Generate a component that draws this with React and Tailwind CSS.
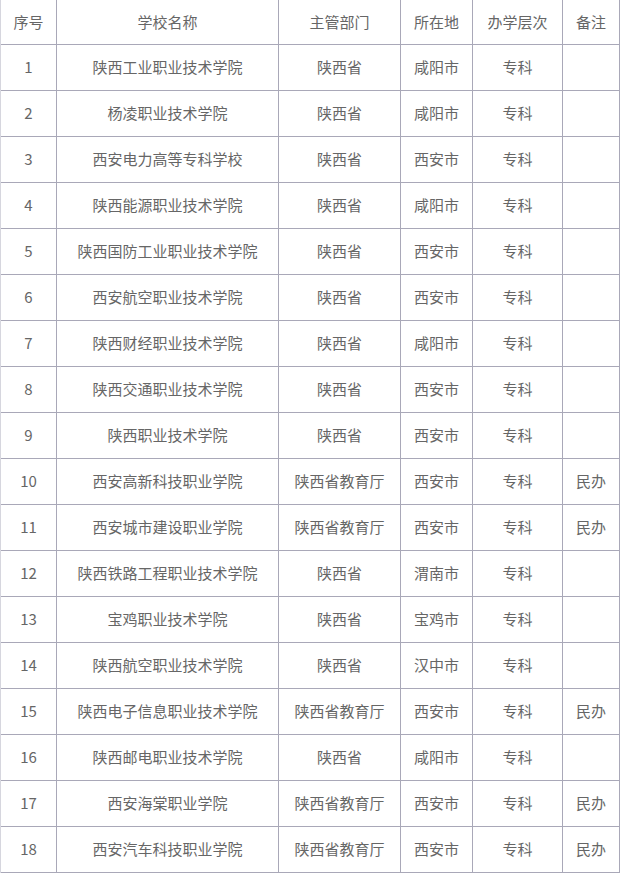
import React from "react";

// 陕西专科院校名单
const rows = [
  ["1", "陕西工业职业技术学院", "陕西省", "咸阳市", "专科", ""],
  ["2", "杨凌职业技术学院", "陕西省", "咸阳市", "专科", ""],
  ["3", "西安电力高等专科学校", "陕西省", "西安市", "专科", ""],
  ["4", "陕西能源职业技术学院", "陕西省", "咸阳市", "专科", ""],
  ["5", "陕西国防工业职业技术学院", "陕西省", "西安市", "专科", ""],
  ["6", "西安航空职业技术学院", "陕西省", "西安市", "专科", ""],
  ["7", "陕西财经职业技术学院", "陕西省", "咸阳市", "专科", ""],
  ["8", "陕西交通职业技术学院", "陕西省", "西安市", "专科", ""],
  ["9", "陕西职业技术学院", "陕西省", "西安市", "专科", ""],
  ["10", "西安高新科技职业学院", "陕西省教育厅", "西安市", "专科", "民办"],
  ["11", "西安城市建设职业学院", "陕西省教育厅", "西安市", "专科", "民办"],
  ["12", "陕西铁路工程职业技术学院", "陕西省", "渭南市", "专科", ""],
  ["13", "宝鸡职业技术学院", "陕西省", "宝鸡市", "专科", ""],
  ["14", "陕西航空职业技术学院", "陕西省", "汉中市", "专科", ""],
  ["15", "陕西电子信息职业技术学院", "陕西省教育厅", "西安市", "专科", "民办"],
  ["16", "陕西邮电职业技术学院", "陕西省", "咸阳市", "专科", ""],
  ["17", "西安海棠职业学院", "陕西省教育厅", "西安市", "专科", "民办"],
  ["18", "西安汽车科技职业学院", "陕西省教育厅", "西安市", "专科", "民办"],
];

const header = ["序号", "学校名称", "主管部门", "所在地", "办学层次", "备注"];

function Row({ cells, tall }) {
  return (
    <div
      className={
        "grid grid-cols-[56px_222px_122px_72px_90px_57px] border-b border-[#a9a8b8] " +
        (tall ? "h-[46px]" : "h-[45px]")
      }
    >
      {cells.map((c, i) => (
        <div
          key={i}
          className="flex items-center justify-center border-r border-[#a9a8b8] text-[15px] text-[#666666] whitespace-nowrap"
        >
          {c}
        </div>
      ))}
    </div>
  );
}

export default function App() {
  return (
    <div
      className="w-[621px] h-[875px] overflow-hidden bg-white"
      style={{ fontFamily: '"Noto Sans CJK SC", "Noto Sans", sans-serif' }}
    >
      <div className="w-[620px] border-l border-[#d6d6de]">
        <Row cells={header} />
        {rows.map((r) => (
          <Row key={r[0]} cells={r} tall />
        ))}
      </div>
    </div>
  );
}
